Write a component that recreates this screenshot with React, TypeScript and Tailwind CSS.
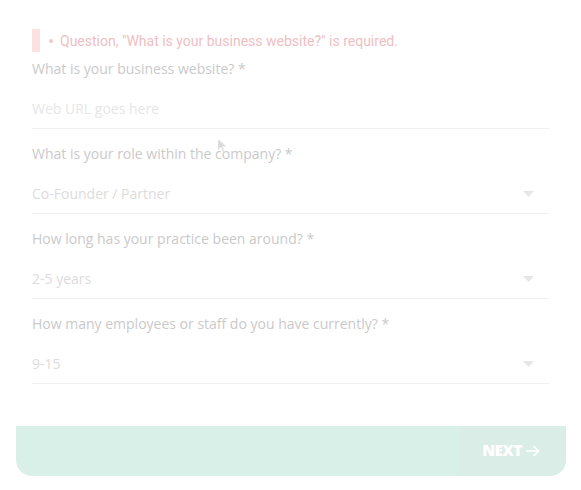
const groups = [
  { label: 'What is your business website? *', value: 'Web URL goes here', placeholder: true, select: false },
  { label: 'What is your role within the company? *', value: 'Co-Founder / Partner', placeholder: false, select: true },
  { label: 'How long has your practice been around? *', value: '2-5 years', placeholder: false, select: true },
  { label: 'How many employees or staff do you have currently? *', value: '9-15', placeholder: false, select: true },
];

const Caret = () => (
  <svg width="11" height="6" viewBox="0 0 11 6" className="mr-[15px]">
    <path d="M0 0h11L5.5 6z" fill="#e6e6e6" />
  </svg>
);

export default function App() {
  return (
    <div className="relative min-h-[490px] w-[581px] bg-white pt-[29px] font-['Open_Sans',sans-serif]">
      <div className="pl-8 pr-[32px]">
        {/* error */}
        <div className="flex h-[23px] items-center">
          <div className="h-[23px] w-[8px] bg-[#fde0e0]" />
          <span className="ml-[9px] mr-[7px] h-[4px] w-[4px] rounded-full bg-[#efc9cb]" />
          <span className="font-['Roboto',sans-serif] text-[14px] leading-[20px] text-[#edc0c3]">
            Question, "What is your business website?" is required.
          </span>
        </div>

        <div className="mt-[7px] flex flex-col gap-[15px]">
          {groups.map((g) => (
            <div key={g.label}>
              <div className="text-[14px] leading-[20px] text-[#cacaca]">{g.label}</div>
              <div className="flex items-center justify-between border-b border-[#f1f1f3] pt-[20px] pb-[9px]">
                <span className={`text-[14px] leading-[20px] ${g.placeholder ? 'text-[#e6e6e6]' : 'text-[#dcdcdc]'}`}>
                  {g.value}
                </span>
                {g.select && <Caret />}
              </div>
            </div>
          ))}
        </div>
      </div>

      <div className="ml-4 mr-[15px] mt-[42px] flex h-[50px] justify-end rounded-b-[16px] bg-[#d9f0e8]">
        <button className="flex items-center gap-[4px] rounded-br-[16px] bg-[#daeee7] pl-[23px] pr-[26px] text-[15.5px] font-extrabold tracking-[-0.5px] text-white">
          NEXT
          <svg width="14" height="12" viewBox="0 0 14 12" fill="none" stroke="white" strokeWidth="1.6">
            <path d="M0 6h12.5M7.5 1l5 5-5 5" />
          </svg>
        </button>
      </div>

      {/* cursor */}
      <svg className="absolute left-[218px] top-[139px]" width="10" height="14" viewBox="0 0 10 14">
        <path d="M0 0v11l3-3 2 5 1.5-.6-2-4.8H8.5z" fill="#d9d9d9" stroke="#f2f2f2" strokeWidth="0.6" />
      </svg>
    </div>
  );
}
